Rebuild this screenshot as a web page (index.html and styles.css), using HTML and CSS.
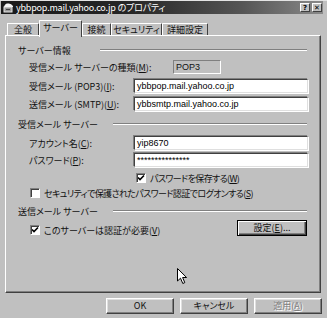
FILE: index.html
```html
<!DOCTYPE html>
<html lang="ja">
<head>
  <meta charset="UTF-8" />
  <title>ybbpop.mail.yahoo.co.jp のプロパティ</title>
  <link rel="stylesheet" href="styles.css">
</head>
<body>
  <div class="window">
    <div class="titlebar">
      <svg class="app-icon" width="11" height="11" viewBox="0 0 11 11">
        <rect x="1" y="5" width="8" height="5" fill="#9a9a9a" stroke="#e8e8e8" stroke-width="1"/>
        <path d="M1 5 Q2 1 5 1.5 Q8 1 10 4 L10 5 Z" fill="#f4f4f4"/>
        <rect x="3" y="7" width="4" height="1" fill="#444"/>
      </svg>
      <span class="title">ybbpop.mail.yahoo.co.jp のプロパティ</span>
      <span class="tb-btn">?</span>
      <span class="tb-btn close">✕</span>
    </div>

    <div class="tabs">
      <div class="tab t-general">全般</div>
      <div class="tab t-server active">サーバー</div>
      <div class="tab t-conn">接続</div>
      <div class="tab t-sec">セキュリティ</div>
      <div class="tab t-adv">詳細設定</div>
    </div>

    <div class="panel">
      <div class="group-title info"><span>サーバー情報</span><i class="rule"></i></div>
      <div class="row first">
        <label class="wide">受信メール サーバーの種類(<u>M</u>):</label>
        <div class="readonly">POP3</div>
      </div>
      <div class="row r2">
        <label>受信メール (POP3)(<u>I</u>):</label>
        <div class="field">ybbpop.mail.yahoo.co.jp</div>
      </div>
      <div class="row r3">
        <label>送信メール (SMTP)(<u>U</u>):</label>
        <div class="field">ybbsmtp.mail.yahoo.co.jp</div>
      </div>

      <div class="group-title g2"><span>受信メール サーバー</span><i class="rule"></i></div>
      <div class="row r4">
        <label>アカウント名(<u>C</u>):</label>
        <div class="field">yip8670</div>
      </div>
      <div class="row r5">
        <label>パスワード(<u>P</u>):</label>
        <div class="field">***************</div>
      </div>
      <div class="check-row save">
        <span class="box checked"></span><span class="tight">パスワードを保存する(<u>W</u>)</span>
      </div>
      <div class="check-row spa">
        <span class="box"></span><span class="tight">セキュリティで保護されたパスワード認証でログオンする(<u>S</u>)</span>
      </div>

      <div class="group-title g3"><span>送信メール サーバー</span><i class="rule"></i></div>
      <div class="auth-row">
        <div class="check-row">
          <span class="box checked"></span><span>このサーバーは認証が必要(<u>V</u>)</span>
        </div>
        <button class="btn default">設定(<u>E</u>)...</button>
      </div>
    </div>

    <div class="actions">
      <button class="btn">OK</button>
      <button class="btn">キャンセル</button>
      <button class="btn disabled">適用(<u>A</u>)</button>
    </div>

    <svg class="cursor" width="12" height="17" viewBox="0 0 12 17">
      <path d="M0.5 0.5 L0.5 13 L3.5 10.2 L5.8 15.5 L7.8 14.6 L5.6 9.5 L9.6 9.5 Z" fill="#fff" stroke="#000" stroke-width="1"/>
    </svg>
  </div>
</body>
</html>
```

FILE: styles.css
```css
body {
  margin: 0;
  background: #c0c0c0;
  font-family: "Noto Sans CJK JP", "DejaVu Sans", sans-serif;
  font-size: 9px;
  font-feature-settings: "palt";
  color: #111;
}
.window {
  position: relative;
  width: 327px;
  height: 318px;
  background: #c0c0c0;
  overflow: hidden;
  box-sizing: border-box;
  border-top: 1px solid #e4e4e4;
}
.titlebar {
  display: flex;
  align-items: center;
  height: 13px;
  margin: 0 4px 0 1px;
  padding-left: 2px;
  background: linear-gradient(90deg, #1a1a1a, #262626 40%, #555 75%, #8a8a8a);
  color: #fff;
}
.app-icon {
  margin-right: 2px;
}
.title {
  flex: 1;
  font-size: 9px;
  letter-spacing: -0.2px;
  white-space: nowrap;
}
.tb-btn {
  width: 10px;
  height: 9px;
  margin-right: 1px;
  background: #c0c0c0;
  color: #000;
  font-family: "DejaVu Sans", sans-serif;
  font-size: 7px;
  font-weight: bold;
  line-height: 9px;
  text-align: center;
  box-sizing: border-box;
  border: 1px solid;
  border-color: #fff #404040 #404040 #fff;
}
.tb-btn.close {
  margin-left: 1px;
}

/* tabs */
.tabs {
  display: flex;
  align-items: flex-end;
  height: 21px;
  padding-left: 7px;
}
.tab {
  height: 12px;
  box-sizing: border-box;
  border-top: 1px solid #fff;
  border-left: 1px solid #fff;
  border-right: 1px solid #404040;
  border-radius: 1px 1px 0 0;
  text-align: center;
  line-height: 11px;
  white-space: nowrap;
}
.tab.active {
  position: relative;
  z-index: 1;
  height: 17px;
  margin-bottom: -2px;
  background: #c0c0c0;
  line-height: 13px;
}
.t-general { width: 32px; }
.t-server { width: 43px; }
.t-conn { width: 29px; }
.t-sec { width: 51px; }
.t-adv { width: 46px; }

/* panel */
.panel {
  width: 316px;
  height: 258px;
  margin-left: 5px;
  padding: 0 12px;
  box-sizing: border-box;
  border: 1px solid;
  border-color: #fff #404040 #404040 #fff;
  box-shadow: inset -1px -1px #808080;
}
.group-title {
  display: flex;
  align-items: center;
  height: 12px;
  margin-top: 6px;
  white-space: nowrap;
}
.group-title span {
  width: 95px;
  flex: none;
}
.group-title.info {
  margin-top: 8px;
}
.group-title.info span {
  width: 82px;
}
.rule {
  flex: 1;
  height: 0;
  margin-right: 1px;
  border-top: 1px solid #808080;
  border-bottom: 1px solid #fff;
}
.g2 { margin-top: 7px; }

.row {
  display: flex;
  align-items: center;
  height: 14px;
}
.row label {
  width: 105px;
  margin-left: 11px;
  white-space: nowrap;
}
.row label.wide {
  width: 144px;
}
.row.first { margin-top: 4px; }
.r2 { margin-top: 5px; }
.r3 { margin-top: 4px; }
.r4 { margin-top: 6px; }
.r5 { margin-top: 3px; }

.field {
  width: 174px;
  height: 14px;
  box-sizing: border-box;
  padding-left: 2px;
  background: #fff;
  border: 1px solid;
  border-color: #404040 #dfdfdf #dfdfdf #404040;
  box-shadow: -1px -1px #808080, 1px 1px #fff;
  font-family: "Liberation Sans", sans-serif;
  line-height: 12px;
  color: #000;
}
.readonly {
  width: 48px;
  height: 14px;
  box-sizing: border-box;
  padding-left: 2px;
  border: 1px solid;
  border-color: #808080 #fff #fff #808080;
  font-family: "Liberation Sans", sans-serif;
  line-height: 12px;
}

.check-row {
  display: flex;
  align-items: center;
  height: 12px;
  margin-left: 12px;
  white-space: nowrap;
}
.check-row.save {
  margin-top: 5px;
  margin-left: 118px;
}
.check-row.spa {
  margin-top: 3px;
}
.tight {
  letter-spacing: -0.6px;
}
.box {
  width: 10px;
  height: 10px;
  margin-right: 4px;
  box-sizing: border-box;
  background: #fff;
  border: 1px solid;
  border-color: #808080 #fff #fff #808080;
  box-shadow: inset 1px 1px #404040;
  flex: none;
}
.box.checked {
  background: #fff url("data:image/svg+xml,%3Csvg xmlns='http://www.w3.org/2000/svg' width='8' height='8'%3E%3Cpath d='M1 3.5 L3 5.5 L7 1.5' fill='none' stroke='%23000' stroke-width='1.6'/%3E%3C/svg%3E") center / 8px 8px no-repeat;
}
.g3 { margin-top: 6px; }

.auth-row {
  display: flex;
  align-items: center;
  justify-content: space-between;
  height: 16px;
  margin-top: 3px;
}
.auth-row .check-row {
  margin-top: 4px;
}

/* buttons */
.btn {
  width: 68px;
  height: 16px;
  padding: 0;
  box-sizing: border-box;
  background: #c0c0c0;
  border: 1px solid;
  border-color: #fff #404040 #404040 #fff;
  box-shadow: inset -1px -1px #808080, inset 1px 1px #dfdfdf;
  font-family: "Noto Sans CJK JP", "DejaVu Sans", sans-serif;
  font-size: 9px;
  font-feature-settings: "palt";
  color: #111;
  line-height: 12px;
}
.btn.default {
  width: 70px;
  margin-right: 1px;
  border-color: #000;
  box-shadow: inset 1px 1px #fff, inset -1px -1px #404040, inset -2px -2px #808080;
}
.btn.disabled {
  color: #808080;
  text-shadow: 1px 1px #fff;
}
.actions {
  display: flex;
  justify-content: flex-end;
  gap: 6px;
  margin-top: 5px;
  padding-right: 5px;
}
.cursor {
  position: absolute;
  left: 177px;
  top: 267px;
}
```
